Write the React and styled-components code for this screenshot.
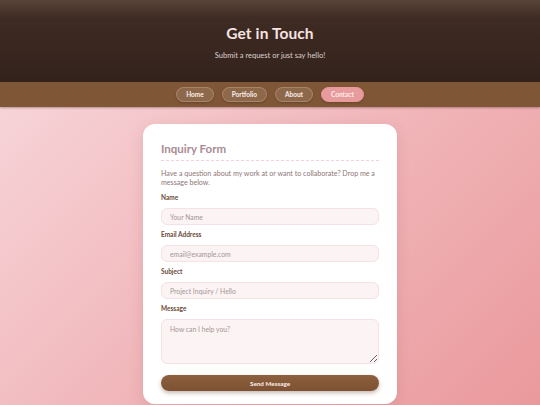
import React from 'react';
import styled, { createGlobalStyle } from 'styled-components';

const GlobalStyle = createGlobalStyle`
  html, body {
    margin: 0;
    padding: 0;
  }
  body {
    font-family: 'Lato', 'Open Sans', sans-serif;
    background: linear-gradient(135deg, #f8dbdf 0%, #f1b9bd 50%, #ea999b 100%);
    min-height: 405px;
    overflow: hidden;
  }
`;

const Page = styled.div`
  width: 540px;
  min-height: 405px;
  display: flex;
  flex-direction: column;
`;

const Header = styled.header`
  height: 82px;
  background: linear-gradient(180deg, #594439 0%, #3e2b23 22%, #33221c 100%);
  display: flex;
  flex-direction: column;
  align-items: center;
  justify-content: center;
  gap: 9px;
  padding-top: 2px;
  box-sizing: border-box;
`;

const Title = styled.h1`
  margin: 0;
  font-size: 15.5px;
  font-weight: 700;
  color: #f6e3e2;
  letter-spacing: 0.1px;
`;

const Subtitle = styled.p`
  margin: 0;
  font-size: 7.5px;
  color: #ddd2cf;
`;

const Nav = styled.nav`
  height: 25px;
  background: #7f5636;
  display: flex;
  justify-content: center;
  align-items: center;
  gap: 8px;
  box-shadow: 0 1px 2px rgba(60, 30, 20, 0.35);
`;

const NavButton = styled.button`
  height: 15px;
  padding: 0 9px;
  border-radius: 8px;
  border: 1px solid ${({ active }) => (active ? '#e89a9c' : 'rgba(255, 235, 220, 0.22)')};
  background: ${({ active }) => (active ? '#e89b9d' : 'rgba(255, 240, 230, 0.12)')};
  color: #fbeee9;
  font-family: inherit;
  font-size: 6.5px;
  font-weight: 700;
  cursor: pointer;
  box-shadow: 0 1px 2px rgba(40, 20, 10, 0.25);
`;

const Main = styled.main`
  display: flex;
  justify-content: center;
  padding-top: 17px;
`;

const Card = styled.section`
  width: 254px;
  box-sizing: border-box;
  background: #ffffff;
  border-radius: 12px;
  padding: 17px 18px 13px;
  box-shadow: 0 4px 14px rgba(160, 80, 80, 0.18);
`;

const CardTitle = styled.h2`
  margin: 0;
  font-size: 11.5px;
  line-height: 16px;
  font-weight: 700;
  color: #a88c93;
  padding-bottom: 3px;
  border-bottom: 1px dashed #f3d3d7;
`;

const Intro = styled.p`
  margin: 8px 0 7px;
  font-size: 7.1px;
  line-height: 9px;
  color: #8e7576;
`;

const Field = styled.div`
  display: flex;
  flex-direction: column;
  gap: 6px;
  margin-bottom: 6px;
`;

const Label = styled.label`
  font-size: 6.5px;
  font-weight: 700;
  color: #6b4a38;
  line-height: 8px;
`;

const inputStyles = `
  display: block;
  width: 100%;
  box-sizing: border-box;
  border: 1px solid #f4e2e5;
  background: #fcf3f4;
  border-radius: 6px;
  padding: 0 8px;
  font-family: inherit;
  font-size: 6.8px;
  color: #6b4a38;
  outline: none;
  &::placeholder {
    color: #a49696;
  }
`;

const Input = styled.input`
  ${inputStyles}
  height: 17px;
`;

const TextArea = styled.textarea`
  ${inputStyles}
  height: 45px;
  padding-top: 5px;
  resize: vertical;
  margin-bottom: 5px;
`;

const SendButton = styled.button`
  display: block;
  width: 100%;
  height: 16px;
  border: none;
  border-radius: 8px;
  background: linear-gradient(180deg, #8d603e 0%, #7c5232 100%);
  color: #fbefe9;
  font-family: inherit;
  font-size: 6.3px;
  font-weight: 700;
  cursor: pointer;
  box-shadow: 0 2px 4px rgba(90, 50, 30, 0.35);
`;

const navItems = ['Home', 'Portfolio', 'About', 'Contact'];

const fields = [
  { id: 'name', label: 'Name', placeholder: 'Your Name' },
  { id: 'email', label: 'Email Address', placeholder: 'email@example.com' },
  { id: 'subject', label: 'Subject', placeholder: 'Project Inquiry / Hello' },
];

const App = () => {
  return (
    <Page>
      <GlobalStyle />
      <Header>
        <Title>Get in Touch</Title>
        <Subtitle>Submit a request or just say hello!</Subtitle>
      </Header>
      <Nav>
        {navItems.map((item) => (
          <NavButton key={item} active={item === 'Contact'}>
            {item}
          </NavButton>
        ))}
      </Nav>
      <Main>
        <Card>
          <CardTitle>Inquiry Form</CardTitle>
          <Intro>
            Have a question about my work at or want to collaborate? Drop me a message below.
          </Intro>
          {fields.map((f) => (
            <Field key={f.id}>
              <Label htmlFor={f.id}>{f.label}</Label>
              <Input id={f.id} placeholder={f.placeholder} />
            </Field>
          ))}
          <Field>
            <Label htmlFor="message">Message</Label>
            <TextArea id="message" placeholder="How can I help you?" />
          </Field>
          <SendButton>Send Message</SendButton>
        </Card>
      </Main>
    </Page>
  );
};

export default App;
